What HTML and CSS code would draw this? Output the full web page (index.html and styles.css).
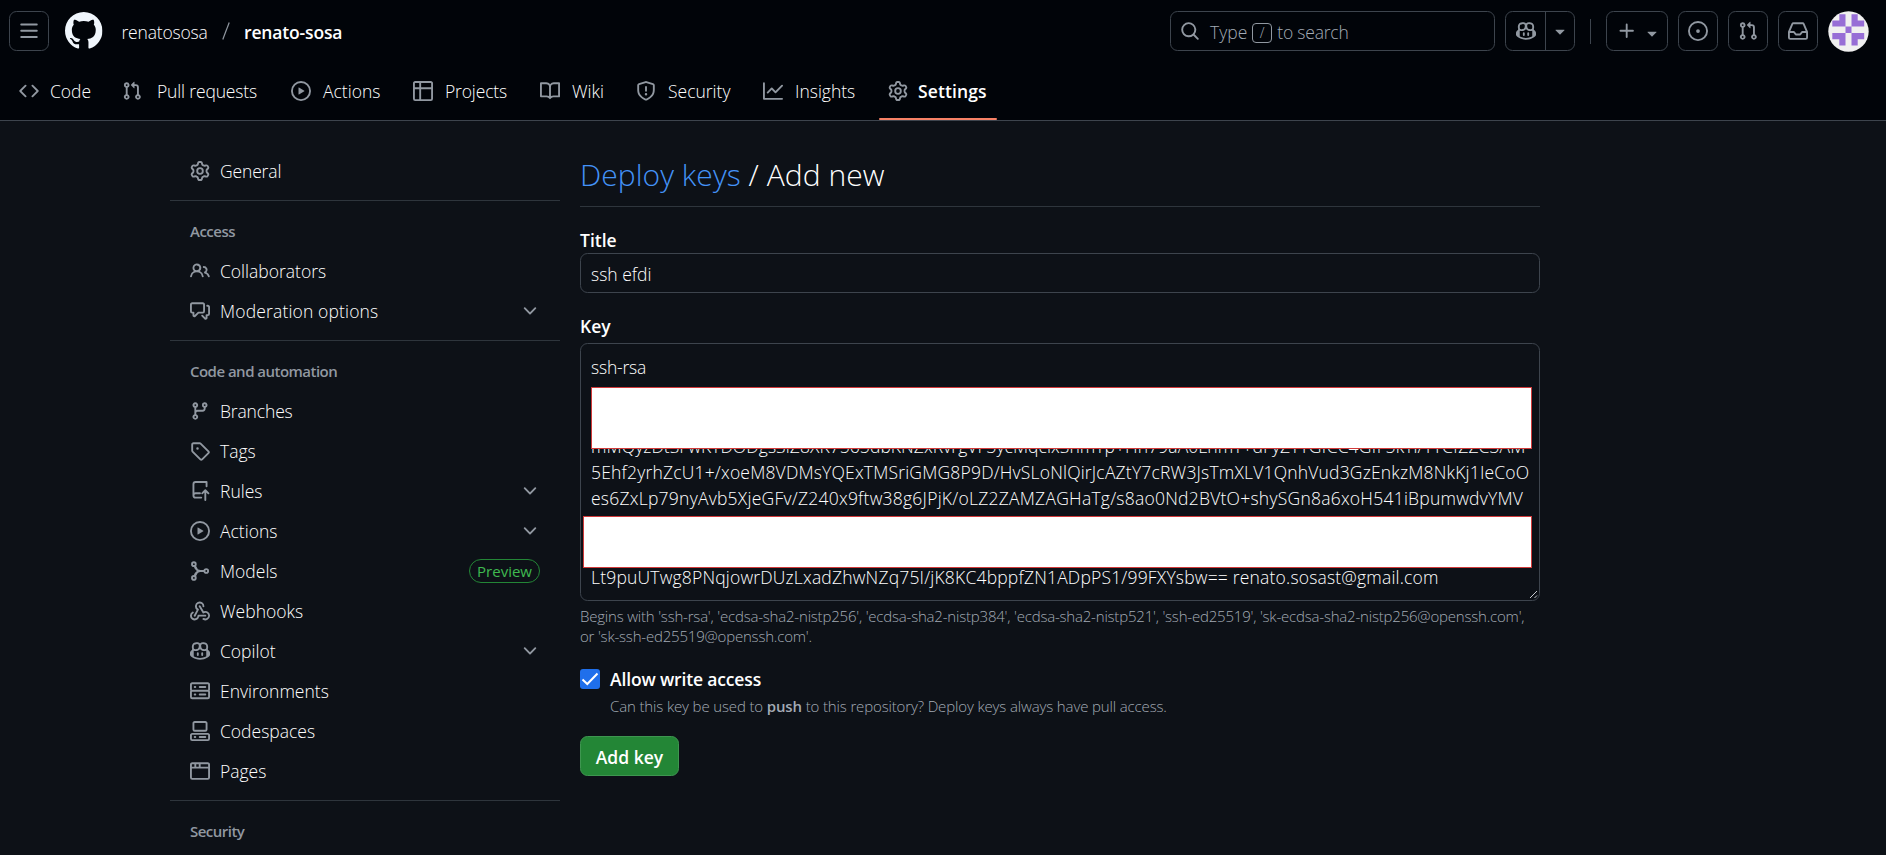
FILE: index.html
```
<!DOCTYPE html>
<html lang="en">
<head>
<meta charset="utf-8">
<title>Add new deploy key</title>
<link rel="stylesheet" href="styles.css">
</head>
<body>
<svg class="sprite" aria-hidden="true">
  <symbol id="bars" viewBox="0 0 16 16"><path d="M1 2.75A.75.75 0 0 1 1.75 2h12.5a.75.75 0 0 1 0 1.5H1.75A.75.75 0 0 1 1 2.75Zm0 5A.75.75 0 0 1 1.75 7h12.5a.75.75 0 0 1 0 1.5H1.75A.75.75 0 0 1 1 7.75ZM1.75 12h12.5a.75.75 0 0 1 0 1.5H1.75a.75.75 0 0 1 0-1.5Z"/></symbol>
  <symbol id="mark" viewBox="0 0 16 16"><path d="M8 0c4.42 0 8 3.58 8 8a8.013 8.013 0 0 1-5.45 7.59c-.4.08-.55-.17-.55-.38 0-.27.01-1.13.01-2.2 0-.75-.25-1.23-.54-1.48 1.78-.2 3.65-.88 3.65-3.95 0-.88-.31-1.59-.82-2.15.08-.2.36-1.02-.08-2.12 0 0-.67-.22-2.2.82-.64-.18-1.32-.27-2-.27-.68 0-1.36.09-2 .27-1.53-1.03-2.2-.82-2.2-.82-.44 1.1-.16 1.92-.08 2.12-.51.56-.82 1.28-.82 2.15 0 3.06 1.86 3.75 3.64 3.95-.23.2-.44.55-.51 1.07-.46.21-1.61.55-2.33-.66-.15-.24-.6-.83-1.23-.82-.67.01-.27.38.01.53.34.19.73.9.82 1.13.16.45.68 1.31 2.69.94 0 .67.01 1.3.01 1.49 0 .21-.15.45-.55.38A7.995 7.995 0 0 1 0 8c0-4.42 3.58-8 8-8Z"/></symbol>
  <symbol id="code" viewBox="0 0 16 16"><path d="m11.28 3.22 4.25 4.25a.75.75 0 0 1 0 1.06l-4.25 4.25a.749.749 0 0 1-1.275-.326.749.749 0 0 1 .215-.734L13.94 8l-3.72-3.72a.749.749 0 0 1 .326-1.275.749.749 0 0 1 .734.215Zm-6.56 0a.751.751 0 0 1 1.042.018.751.751 0 0 1 .018 1.042L2.06 8l3.72 3.72a.749.749 0 0 1-.326 1.275.749.749 0 0 1-.734-.215L.47 8.53a.75.75 0 0 1 0-1.06Z"/></symbol>
  <symbol id="pr" viewBox="0 0 16 16"><path d="M1.5 3.25a2.25 2.25 0 1 1 3 2.122v5.256a2.251 2.251 0 1 1-1.5 0V5.372A2.25 2.25 0 0 1 1.5 3.25Zm5.677-.177L9.573.677A.25.25 0 0 1 10 .854V2.5h1A2.5 2.5 0 0 1 13.5 5v5.628a2.251 2.251 0 1 1-1.5 0V5a1 1 0 0 0-1-1h-1v1.646a.25.25 0 0 1-.427.177L7.177 3.427a.25.25 0 0 1 0-.354ZM3.75 2.5a.75.75 0 1 0 0 1.5.75.75 0 0 0 0-1.5Zm0 9.5a.75.75 0 1 0 0 1.5.75.75 0 0 0 0-1.5Zm8.25.75a.75.75 0 1 0 1.5 0 .75.75 0 0 0-1.5 0Z"/></symbol>
  <symbol id="play" viewBox="0 0 16 16"><path d="M8 0a8 8 0 1 1 0 16A8 8 0 0 1 8 0ZM1.5 8a6.5 6.5 0 1 0 13 0 6.5 6.5 0 0 0-13 0Zm4.879-2.773 4.264 2.559a.25.25 0 0 1 0 .428l-4.264 2.559A.25.25 0 0 1 6 10.559V5.442a.25.25 0 0 1 .379-.215Z"/></symbol>
  <symbol id="table" viewBox="0 0 16 16"><path d="M0 1.75C0 .784.784 0 1.75 0h12.5C15.216 0 16 .784 16 1.75v12.5A1.75 1.75 0 0 1 14.25 16H1.75A1.75 1.75 0 0 1 0 14.25ZM6.5 6.5v8h7.75a.25.25 0 0 0 .25-.25V6.5Zm8-1.5V1.75a.25.25 0 0 0-.25-.25H6.5V5Zm-13 1.5v7.75c0 .138.112.25.25.25H5v-8ZM5 5V1.5H1.75a.25.25 0 0 0-.25.25V5Z"/></symbol>
  <symbol id="book" viewBox="0 0 16 16"><path d="M0 1.75A.75.75 0 0 1 .75 1h4.253c1.227 0 2.317.59 3 1.501A3.743 3.743 0 0 1 11.006 1h4.245a.75.75 0 0 1 .75.75v10.5a.75.75 0 0 1-.75.75h-4.507a2.25 2.25 0 0 0-1.591.659l-.622.621a.75.75 0 0 1-1.06 0l-.622-.621A2.25 2.25 0 0 0 5.258 13H.75a.75.75 0 0 1-.75-.75Zm7.251 10.324.004-5.073-.002-2.253A2.25 2.25 0 0 0 5.003 2.5H1.5v9h3.757a3.75 3.75 0 0 1 1.994.574ZM8.755 4.75l-.004 7.322a3.752 3.752 0 0 1 1.992-.572H14.5v-9h-3.495a2.25 2.25 0 0 0-2.25 2.25Z"/></symbol>
  <symbol id="shield" viewBox="0 0 16 16"><path d="M7.467.133a1.748 1.748 0 0 1 1.066 0l5.25 1.68A1.75 1.75 0 0 1 15 3.48V7c0 1.566-.32 3.182-1.303 4.682-.983 1.498-2.585 2.813-5.032 3.855a1.697 1.697 0 0 1-1.33 0c-2.447-1.042-4.049-2.357-5.032-3.855C1.32 10.182 1 8.566 1 7V3.48a1.75 1.75 0 0 1 1.217-1.667Zm.61 1.429a.25.25 0 0 0-.153 0l-5.25 1.68a.25.25 0 0 0-.174.238V7c0 1.358.275 2.666 1.057 3.86.784 1.194 2.121 2.34 4.366 3.297a.196.196 0 0 0 .154 0c2.245-.956 3.582-2.104 4.366-3.298C13.225 9.666 13.5 8.36 13.5 7V3.48a.251.251 0 0 0-.174-.237l-5.25-1.68ZM8.75 4.75v3a.75.75 0 0 1-1.5 0v-3a.75.75 0 0 1 1.5 0ZM9 10.5a1 1 0 1 1-2 0 1 1 0 0 1 2 0Z"/></symbol>
  <symbol id="graph" viewBox="0 0 16 16"><path d="M1.5 1.75V13.5h13.75a.75.75 0 0 1 0 1.5H.75a.75.75 0 0 1-.75-.75V1.75a.75.75 0 0 1 1.5 0Zm14.28 2.53-5.25 5.25a.75.75 0 0 1-1.06 0L7 7.06 4.28 9.78a.751.751 0 0 1-1.042-.018.751.751 0 0 1-.018-1.042l3.25-3.25a.75.75 0 0 1 1.06 0L10 7.94l4.72-4.72a.751.751 0 0 1 1.042.018.751.751 0 0 1 .018 1.042Z"/></symbol>
  <symbol id="gear" viewBox="0 0 16 16"><path d="M8 0a8.2 8.2 0 0 1 .701.031C9.444.095 9.99.645 10.16 1.29l.288 1.107c.018.066.079.158.212.224.231.114.454.243.668.386.123.082.233.09.299.071l1.103-.303c.644-.176 1.392.021 1.82.63.27.385.506.792.704 1.218.315.675.111 1.422-.364 1.891l-.814.806c-.049.048-.098.147-.088.294.016.257.016.515 0 .772-.01.147.038.246.088.294l.814.806c.475.469.679 1.216.364 1.891a7.977 7.977 0 0 1-.704 1.217c-.428.61-1.176.807-1.82.63l-1.102-.302c-.067-.019-.177-.011-.3.071a5.909 5.909 0 0 1-.668.386c-.133.066-.194.158-.211.224l-.29 1.106c-.168.646-.715 1.196-1.458 1.26a8.006 8.006 0 0 1-1.402 0c-.743-.064-1.289-.614-1.458-1.26l-.289-1.106c-.018-.066-.079-.158-.212-.224a5.738 5.738 0 0 1-.668-.386c-.123-.082-.233-.09-.299-.071l-1.103.303c-.644.176-1.392-.021-1.82-.63a8.12 8.12 0 0 1-.704-1.218c-.315-.675-.111-1.422.363-1.891l.815-.806c.05-.048.098-.147.088-.294a6.214 6.214 0 0 1 0-.772c.01-.147-.038-.246-.088-.294l-.815-.806C.635 6.045.431 5.298.746 4.623a7.92 7.92 0 0 1 .704-1.217c.428-.61 1.176-.807 1.82-.63l1.102.302c.067.019.177.011.3-.071.214-.143.437-.272.668-.386.133-.066.194-.158.211-.224l.29-1.106C6.009.645 6.556.095 7.299.03 7.53.01 7.764 0 8 0Zm-.571 1.525c-.036.003-.108.036-.137.146l-.289 1.105c-.147.561-.549.967-.998 1.189-.173.086-.34.183-.5.29-.417.278-.97.423-1.529.27l-1.103-.303c-.109-.03-.175.016-.195.045-.22.312-.412.644-.573.99-.014.031-.021.11.059.19l.815.806c.411.406.562.957.53 1.456a4.709 4.709 0 0 0 0 .582c.032.499-.119 1.05-.53 1.456l-.815.806c-.081.08-.073.159-.059.19.162.346.353.677.573.989.02.03.085.076.195.046l1.102-.303c.56-.153 1.113-.008 1.53.27.161.107.328.204.501.29.447.222.85.629.997 1.189l.289 1.105c.029.109.101.143.137.146a6.6 6.6 0 0 0 1.142 0c.036-.003.108-.036.137-.146l.289-1.105c.147-.561.549-.967.998-1.189.173-.086.34-.183.5-.29.417-.278.97-.423 1.529-.27l1.103.303c.109.029.175-.016.195-.045.22-.313.411-.644.573-.99.014-.031.021-.11-.059-.19l-.815-.806c-.411-.406-.562-.957-.53-1.456a4.709 4.709 0 0 0 0-.582c-.032-.499.119-1.05.53-1.456l.815-.806c.081-.08.073-.159.059-.19a6.464 6.464 0 0 0-.573-.989c-.02-.03-.085-.076-.195-.046l-1.102.303c-.56.153-1.113.008-1.53-.27a4.44 4.44 0 0 0-.501-.29c-.447-.222-.85-.629-.997-1.189l-.289-1.105c-.029-.11-.101-.143-.137-.146a6.6 6.6 0 0 0-1.142 0ZM11 8a3 3 0 1 1-6 0 3 3 0 0 1 6 0ZM9.5 8a1.5 1.5 0 1 0-3.001.001A1.5 1.5 0 0 0 9.5 8Z"/></symbol>
  <symbol id="search" viewBox="0 0 16 16"><path d="M10.68 11.74a6 6 0 0 1-7.922-8.982 6 6 0 0 1 8.982 7.922l3.04 3.04a.749.749 0 0 1-.326 1.275.749.749 0 0 1-.734-.215ZM11.5 7a4.499 4.499 0 1 0-8.997 0A4.499 4.499 0 0 0 11.5 7Z"/></symbol>
  <symbol id="copilot" viewBox="0 0 16 16"><path d="M7.998 15.035c-4.562 0-7.873-2.914-7.998-3.749V9.338c.085-.628.677-1.686 1.588-2.065.013-.07.024-.143.036-.218.029-.183.06-.384.126-.612-.201-.508-.254-1.084-.254-1.656 0-.87.128-1.769.693-2.484.579-.733 1.494-1.124 2.724-1.261 1.206-.134 2.262.034 2.944.765.05.053.096.108.139.165.044-.057.094-.112.143-.165.682-.731 1.738-.899 2.944-.765 1.23.137 2.145.528 2.724 1.261.566.715.693 1.614.693 2.484 0 .572-.053 1.148-.254 1.656.066.228.098.429.126.612.012.076.024.148.037.218.924.385 1.522 1.471 1.591 2.095v1.872c0 .766-3.351 3.795-8.002 3.795Zm0-1.485c2.28 0 4.584-1.11 5.002-1.433V7.862l-.023-.116c-.49.21-1.075.291-1.727.291-1.146 0-2.059-.327-2.71-.991A3.222 3.222 0 0 1 8 6.303a3.24 3.24 0 0 1-.544.743c-.65.664-1.563.991-2.71.991-.652 0-1.236-.081-1.727-.291l-.023.116v4.255c.419.323 2.722 1.433 5.002 1.433ZM6.762 2.83c-.193-.206-.637-.413-1.682-.297-1.019.113-1.479.404-1.713.7-.247.312-.369.789-.369 1.554 0 .793.129 1.171.308 1.371.162.181.519.379 1.442.379.853 0 1.339-.235 1.638-.54.315-.322.527-.827.617-1.553.117-.935-.037-1.395-.241-1.614Zm4.155-.297c-1.044-.116-1.488.091-1.681.297-.204.219-.359.679-.242 1.614.091.726.303 1.231.618 1.553.299.305.784.54 1.638.54.922 0 1.28-.198 1.442-.379.179-.2.308-.578.308-1.371 0-.765-.123-1.242-.37-1.554-.233-.296-.693-.587-1.713-.7Z"/><path d="M6.25 9.037a.75.75 0 0 1 .75.75v1.501a.75.75 0 0 1-1.5 0V9.787a.75.75 0 0 1 .75-.75Zm4.25.75v1.501a.75.75 0 0 1-1.5 0V9.787a.75.75 0 0 1 1.5 0Z"/></symbol>
  <symbol id="issue" viewBox="0 0 16 16"><path d="M8 9.5a1.5 1.5 0 1 0 0-3 1.5 1.5 0 0 0 0 3Z"/><path d="M8 0a8 8 0 1 1 0 16A8 8 0 0 1 8 0ZM1.5 8a6.5 6.5 0 1 0 13 0 6.5 6.5 0 0 0-13 0Z"/></symbol>
  <symbol id="inbox" viewBox="0 0 16 16"><path d="M2.8 2.06A1.75 1.75 0 0 1 4.41 1h7.18c.7 0 1.333.417 1.61 1.06l2.74 6.395c.04.093.06.194.06.295v4.5A1.75 1.75 0 0 1 14.25 15H1.75A1.75 1.75 0 0 1 0 13.25v-4.5c0-.101.02-.202.06-.295Zm1.61.44a.25.25 0 0 0-.23.152L1.887 8H4.75a.75.75 0 0 1 .6.3L6.625 10h2.75l1.275-1.7a.75.75 0 0 1 .6-.3h2.863L11.82 2.652a.25.25 0 0 0-.23-.152Zm10.09 7h-2.875l-1.275 1.7a.75.75 0 0 1-.6.3h-3.5a.75.75 0 0 1-.6-.3L4.375 9.5H1.5v3.75c0 .138.112.25.25.25h12.5a.25.25 0 0 0 .25-.25Z"/></symbol>
  <symbol id="people" viewBox="0 0 16 16"><path d="M2 5.5a3.5 3.5 0 1 1 5.898 2.549 5.508 5.508 0 0 1 3.034 4.084.75.75 0 1 1-1.482.235 4 4 0 0 0-7.9 0 .75.75 0 0 1-1.482-.236A5.507 5.507 0 0 1 3.102 8.05 3.493 3.493 0 0 1 2 5.5ZM11 4a3.001 3.001 0 0 1 2.22 5.018 5.01 5.01 0 0 1 2.56 3.012.749.749 0 0 1-.885.954.752.752 0 0 1-.549-.514 3.507 3.507 0 0 0-2.522-2.372.75.75 0 0 1-.574-.73v-.352a.75.75 0 0 1 .416-.672A1.5 1.5 0 0 0 11 5.5.75.75 0 0 1 11 4Zm-5.5-.5a2 2 0 1 0-.001 3.999A2 2 0 0 0 5.5 3.5Z"/></symbol>
  <symbol id="discussion" viewBox="0 0 16 16"><path d="M1.75 1h8.5c.966 0 1.75.784 1.75 1.75v5.5A1.75 1.75 0 0 1 10.25 10H7.061l-2.574 2.573A1.458 1.458 0 0 1 2 11.543V10h-.25A1.75 1.75 0 0 1 0 8.25v-5.5C0 1.784.784 1 1.75 1ZM1.5 2.75v5.5c0 .138.112.25.25.25h1a.75.75 0 0 1 .75.75v2.19l2.72-2.72a.749.749 0 0 1 .53-.22h3.5a.25.25 0 0 0 .25-.25v-5.5a.25.25 0 0 0-.25-.25h-8.5a.25.25 0 0 0-.25.25Zm13 2a.25.25 0 0 0-.25-.25h-.5a.75.75 0 0 1 0-1.5h.5c.966 0 1.75.784 1.75 1.75v5.5A1.75 1.75 0 0 1 14.25 12H14v1.543a1.458 1.458 0 0 1-2.487 1.03L9.22 12.28a.749.749 0 0 1 .326-1.275.749.749 0 0 1 .734.215l2.22 2.22v-2.19a.75.75 0 0 1 .75-.75h1a.25.25 0 0 0 .25-.25Z"/></symbol>
  <symbol id="branch" viewBox="0 0 16 16"><path d="M9.5 3.25a2.25 2.25 0 1 1 3 2.122V6A2.5 2.5 0 0 1 10 8.5H6a1 1 0 0 0-1 1v1.128a2.251 2.251 0 1 1-1.5 0V5.372a2.25 2.25 0 1 1 1.5 0v1.836A2.493 2.493 0 0 1 6 7h4a1 1 0 0 0 1-1v-.628A2.25 2.25 0 0 1 9.5 3.25Zm-6 0a.75.75 0 1 0 1.5 0 .75.75 0 0 0-1.5 0Zm8.25-.75a.75.75 0 1 0 0 1.5.75.75 0 0 0 0-1.5ZM4.25 12a.75.75 0 1 0 0 1.5.75.75 0 0 0 0-1.5Z"/></symbol>
  <symbol id="tag" viewBox="0 0 16 16"><path d="M1 7.775V2.75C1 1.784 1.784 1 2.75 1h5.025c.464 0 .91.184 1.238.513l6.25 6.25a1.75 1.75 0 0 1 0 2.474l-5.026 5.026a1.75 1.75 0 0 1-2.474 0l-6.25-6.25A1.752 1.752 0 0 1 1 7.775Zm1.5 0c0 .066.026.13.073.177l6.25 6.25a.25.25 0 0 0 .354 0l5.025-5.025a.25.25 0 0 0 0-.354l-6.25-6.25a.25.25 0 0 0-.177-.073H2.75a.25.25 0 0 0-.25.25ZM6 5a1 1 0 1 1 0 2 1 1 0 0 1 0-2Z"/></symbol>
  <symbol id="rules" viewBox="0 0 16 16"><g fill="none" stroke="currentColor" stroke-width="1.5" stroke-linecap="round" stroke-linejoin="round"><path d="M13.25 4.25V.75H4.5A1.75 1.75 0 0 0 2.75 2.5v9M8 9.75H4.5a1.75 1.75 0 0 0 0 3.5H9"/><path d="M12.25 15.25V7.6M9.75 9.9l2.5-2.5 2.5 2.5"/></g></symbol>
  <symbol id="model" viewBox="0 0 16 16"><g fill="none" stroke="currentColor" stroke-width="1.5" stroke-linecap="round"><circle cx="3.1" cy="2.5" r="1.5"/><circle cx="3.1" cy="13.5" r="1.5"/><circle cx="13" cy="8" r="1.5"/><path d="M11.4 8H6.2M4 4l2.2 4L4 12M3.7 4.2C4.3 6 5 7.4 8 8 5 8.6 4.3 10 3.7 11.8"/></g></symbol>
  <symbol id="webhook" viewBox="0 0 16 16"><path d="M5.5 4.25a2.25 2.25 0 0 1 4.5 0 .75.75 0 0 0 1.5 0 3.75 3.75 0 1 0-6.14 2.889l-2.272 4.258a.75.75 0 0 0 1.324.706L7 7.25a.75.75 0 0 0-.309-1.015A2.25 2.25 0 0 1 5.5 4.25Z"/><path d="M7.364 3.607a.75.75 0 0 1 1.03.257l2.608 4.349a3.75 3.75 0 1 1-.628 6.785.75.75 0 0 1 .752-1.299 2.25 2.25 0 1 0-.033-3.88.75.75 0 0 1-1.03-.256L7.107 4.636a.75.75 0 0 1 .257-1.03Z"/><path d="M2.9 8.776A.75.75 0 0 1 2.625 9.8 2.25 2.25 0 1 0 6 11.75a.75.75 0 0 1 .75-.751h5.5a.75.75 0 0 1 0 1.5H7.425a3.751 3.751 0 1 1-5.55-3.998.75.75 0 0 1 1.024.274Z"/></symbol>
  <symbol id="server" viewBox="0 0 16 16"><path d="M1.75 1h12.5c.966 0 1.75.784 1.75 1.75v4c0 .372-.116.717-.314 1 .198.283.314.628.314 1v4a1.75 1.75 0 0 1-1.75 1.75H1.75A1.75 1.75 0 0 1 0 12.75v-4c0-.358.109-.707.314-1a1.739 1.739 0 0 1-.314-1v-4C0 1.784.784 1 1.75 1ZM1.5 2.75v4c0 .138.112.25.25.25h12.5a.25.25 0 0 0 .25-.25v-4a.25.25 0 0 0-.25-.25H1.75a.25.25 0 0 0-.25.25Zm.25 5.75a.25.25 0 0 0-.25.25v4c0 .138.112.25.25.25h12.5a.25.25 0 0 0 .25-.25v-4a.25.25 0 0 0-.25-.25ZM7 4.75A.75.75 0 0 1 7.75 4h4.5a.75.75 0 0 1 0 1.5h-4.5A.75.75 0 0 1 7 4.75ZM7.75 10h4.5a.75.75 0 0 1 0 1.5h-4.5a.75.75 0 0 1 0-1.5ZM3 4.75A.75.75 0 0 1 3.75 4h.5a.75.75 0 0 1 0 1.5h-.5A.75.75 0 0 1 3 4.75ZM3.75 10h.5a.75.75 0 0 1 0 1.5h-.5a.75.75 0 0 1 0-1.5Z"/></symbol>
  <symbol id="codespaces" viewBox="0 0 16 16"><path d="M0 11.25c0-.966.784-1.75 1.75-1.75h12.5c.966 0 1.75.784 1.75 1.75v3A1.75 1.75 0 0 1 14.25 16H1.75A1.75 1.75 0 0 1 0 14.25Zm2-9.5C2 .784 2.784 0 3.75 0h8.5C13.216 0 14 .784 14 1.75v5a1.75 1.75 0 0 1-1.75 1.75h-8.5A1.75 1.75 0 0 1 2 6.75Zm1.75-.25a.25.25 0 0 0-.25.25v5c0 .138.112.25.25.25h8.5a.25.25 0 0 0 .25-.25v-5a.25.25 0 0 0-.25-.25Zm-2 9.5a.25.25 0 0 0-.25.25v3c0 .138.112.25.25.25h12.5a.25.25 0 0 0 .25-.25v-3a.25.25 0 0 0-.25-.25Z"/><path d="M7 12.75a.75.75 0 0 1 .75-.75h4.5a.75.75 0 0 1 0 1.5h-4.5a.75.75 0 0 1-.75-.75Zm-4 0a.75.75 0 0 1 .75-.75h.5a.75.75 0 0 1 0 1.5h-.5a.75.75 0 0 1-.75-.75Z"/></symbol>
  <symbol id="browser" viewBox="0 0 16 16"><path d="M0 2.75C0 1.784.784 1 1.75 1h12.5c.966 0 1.75.784 1.75 1.75v10.5A1.75 1.75 0 0 1 14.25 15H1.75A1.75 1.75 0 0 1 0 13.25ZM14.5 6h-13v7.25c0 .138.112.25.25.25h12.5a.25.25 0 0 0 .25-.25Zm-6-3.5v2h6V2.75a.25.25 0 0 0-.25-.25ZM5 2.5v2h2v-2Zm-3.25 0a.25.25 0 0 0-.25.25V4.5h2v-2Z"/></symbol>
  <symbol id="chevron" viewBox="0 0 16 16"><path d="M12.78 5.22a.749.749 0 0 1 0 1.06l-4.25 4.25a.749.749 0 0 1-1.06 0L3.22 6.28a.749.749 0 1 1 1.06-1.06L8 8.939l3.72-3.719a.749.749 0 0 1 1.06 0Z"/></symbol>
  <symbol id="plus" viewBox="0 0 16 16"><path d="M7.75 2a.75.75 0 0 1 .75.75V7h4.25a.75.75 0 0 1 0 1.5H8.5v4.25a.75.75 0 0 1-1.5 0V8.5H2.75a.75.75 0 0 1 0-1.5H7V2.75A.75.75 0 0 1 7.75 2Z"/></symbol>
  <symbol id="triangle" viewBox="0 0 16 16"><path d="m4.427 7.427 3.396 3.396a.25.25 0 0 0 .354 0l3.396-3.396A.25.25 0 0 0 11.396 7H4.604a.25.25 0 0 0-.177.427Z"/></symbol>
</svg>

<header class="header">
  <div class="topbar">
    <button class="icon-button"><svg class="icon"><use href="#bars"/></svg></button>
    <svg class="logo"><use href="#mark"/></svg>
    <div class="crumbs"><span class="owner">renatososa</span><svg class="crumb-slash" viewBox="0 0 8 18"><path d="M7.2.5.8 17.5"/></svg><strong>renato-sosa</strong></div>
    <div class="tools">
      <div class="search"><svg class="icon"><use href="#search"/></svg><span class="search-type">Type</span><kbd>/</kbd><span class="search-rest">to search</span></div>
      <div class="split-button"><span class="split-main"><svg class="icon"><use href="#copilot"/></svg></span><span class="split-caret"><svg class="icon"><use href="#triangle"/></svg></span></div>
      <span class="separator"></span>
      <div class="new-button"><svg class="icon"><use href="#plus"/></svg><svg class="icon caret"><use href="#triangle"/></svg></div>
      <button class="icon-button"><svg class="icon"><use href="#issue"/></svg></button>
      <button class="icon-button"><svg class="icon"><use href="#pr"/></svg></button>
      <button class="icon-button"><svg class="icon"><use href="#inbox"/></svg></button>
      <svg class="avatar" viewBox="0 0 41 41"><clipPath id="round"><circle cx="20.5" cy="20.5" r="20.2"/></clipPath><g clip-path="url(#round)"><path fill="#f0f0f0" d="M0 0h41v41H0z"/><path fill="#976ed6" d="M11.3 3.2h6.2v12.4H4.3V9.4h7zM23.5 3.2h6.2v6.2h6.5v6.2H23.5zM17.5 15.600h6v6.300h-6zM4.300 21.900h13.200v12.500h-6.200v-6.200h-7zM23.500 21.900h12.700v6.300h-6.500v6.200h-6.200z"/></g></svg>
    </div>
  </div>
  <nav class="nav">
    <a class="nav-item"><svg class="icon"><use href="#code"/></svg>Code</a>
    <a class="nav-item snug wide-gap"><svg class="icon"><use href="#pr"/></svg>Pull requests</a>
    <a class="nav-item"><svg class="icon"><use href="#play"/></svg>Actions</a>
    <a class="nav-item snug"><svg class="icon"><use href="#table"/></svg>Projects</a>
    <a class="nav-item"><svg class="icon"><use href="#book"/></svg>Wiki</a>
    <a class="nav-item"><svg class="icon"><use href="#shield"/></svg>Security</a>
    <a class="nav-item"><svg class="icon"><use href="#graph"/></svg>Insights</a>
    <a class="nav-item selected"><svg class="icon"><use href="#gear"/></svg>Settings</a>
  </nav>
</header>

<div class="page">
  <aside class="sidebar">
    <section class="group">
      <a class="row snug"><svg class="icon"><use href="#gear"/></svg>General</a>
    </section>
    <section class="group">
      <h2>Access</h2>
      <a class="row"><svg class="icon"><use href="#people"/></svg>Collaborators</a>
      <a class="row airy"><svg class="icon"><use href="#discussion"/></svg>Moderation options<svg class="icon end"><use href="#chevron"/></svg></a>
    </section>
    <section class="group">
      <h2>Code and automation</h2>
      <a class="row snug"><svg class="icon"><use href="#branch"/></svg>Branches</a>
      <a class="row"><svg class="icon"><use href="#tag"/></svg>Tags</a>
      <a class="row"><svg class="icon"><use href="#rules"/></svg>Rules<svg class="icon end"><use href="#chevron"/></svg></a>
      <a class="row"><svg class="icon"><use href="#play"/></svg>Actions<svg class="icon end"><use href="#chevron"/></svg></a>
      <a class="row"><svg class="icon"><use href="#model"/></svg>Models<span class="pill end">Preview</span></a>
      <a class="row"><svg class="icon"><use href="#webhook"/></svg>Webhooks</a>
      <a class="row"><svg class="icon"><use href="#copilot"/></svg>Copilot<svg class="icon end"><use href="#chevron"/></svg></a>
      <a class="row"><svg class="icon"><use href="#server"/></svg>Environments</a>
      <a class="row"><svg class="icon"><use href="#codespaces"/></svg>Codespaces</a>
      <a class="row"><svg class="icon"><use href="#browser"/></svg>Pages</a>
    </section>
    <section class="group last">
      <h2>Security</h2>
    </section>
  </aside>

  <main class="content">
    <h1><a>Deploy keys</a> / Add new</h1>
    <div class="label">Title</div>
    <div class="input">ssh efdi</div>
    <div class="label">Key</div>
    <div class="textarea">
      <div class="line line-short">ssh-rsa</div>
      <div class="line"></div>
      <div class="line"></div>
      <div class="line line-dense">mMQyzDtSFwKTDODgsSiZ8XK7565dbKNZxRvrgVF3ycMqclxShmTp+Hh79aA0LnmT+dFyZTYGfCC4GfF5kYi/TTCfZZC3AM</div>
      <div class="line">5Ehf2yrhZcU1+/xoeM8VDMsYQExTMSriGMG8P9D/HvSLoNlQirJcAZtY7cRW3JsTmXLV1QnhVud3GzEnkzM8NkKj1IeCoO</div>
      <div class="line line-loose">es6ZxLp79nyAvb5XjeGFv/Z240x9ftw38g6JPjK/oLZ2ZAMZAGHaTg/s8ao0Nd2BVtO+shySGn8a6xoH541iBpumwdvYMV</div>
      <div class="line"></div>
      <div class="line"></div>
      <div class="line">Lt9puUTwg8PNqjowrDUzLxadZhwNZq75I/jK8KC4bppfZN1ADpPS1/99FXYsbw== renato.sosast@gmail.com</div>
      <div class="cover cover-top"></div>
      <div class="cover cover-bottom"></div>
      <svg class="grip" viewBox="0 0 9 9"><path d="M1 8 8 1M5.500 8 8 5.500"/></svg>
    </div>
    <p class="hint">Begins with 'ssh-rsa', 'ecdsa-sha2-nistp256', 'ecdsa-sha2-nistp384', 'ecdsa-sha2-nistp521', 'ssh-ed25519', 'sk-ecdsa-sha2-nistp256@openssh.com',<br>or 'sk-ssh-ed25519@openssh.com'.</p>
    <div class="check-row">
      <span class="checkbox"><svg viewBox="0 0 20 20"><path d="M2.500 10.500 7.300 15 17.500 4.500"/></svg></span>
      <strong>Allow write access</strong>
    </div>
    <p class="note">Can this key be used to <b>push</b> to this repository? Deploy keys always have pull access.</p>
    <button class="submit">Add key</button>
  </main>
</div>
</body>
</html>
```
FILE: styles.css
```
* { box-sizing: border-box; }
body {
  margin: 0;
  height: 855px;
  overflow: hidden;
  background: #0d1117;
  color: #fff;
  font: 300 17.5px/26.25px "Open Sans", "Noto Sans", sans-serif;
}
.sprite { display: none; }
.icon { width: 20px; height: 20px; flex: none; fill: currentColor; color: #9198a1; }
button { font: inherit; color: inherit; padding: 0; }

.header { height: 121px; background: #010409; border-bottom: 1px solid #3d444d; }
.topbar { height: 62px; padding: 0 17px 0 9px; display: flex; align-items: center; }
.icon-button {
  width: 40px; height: 40px; flex: none;
  display: flex; align-items: center; justify-content: center;
  background: none; border: 1px solid #3d444d; border-radius: 7.5px;
}
.logo { width: 37.5px; height: 37.5px; margin-left: 16px; fill: #f0f6fc; }
.crumbs { display: flex; align-items: center; margin-left: 19px; padding-top: 3px; }
.owner { letter-spacing: -0.2px; width: 100.5px; }
.crumb-slash { width: 8px; height: 18px; margin: -3px 14px 0 0; fill: none; stroke: #9198a1; stroke-width: 1.2; }
.crumbs strong { font-weight: 600; letter-spacing: -0.15px; }
.tools { display: flex; align-items: center; margin-left: auto; gap: 10px; }
.search {
  width: 325px; height: 40px; padding-left: 9px;
  display: flex; align-items: center;
  border: 1px solid #3d444d; border-radius: 7.5px; color: #a3abb5;
}
.search-type { margin-left: 10px; }
.search-type, .search-rest { padding-top: 2px; }
.search kbd {
  width: 20px; height: 20px; margin: 3px 5px 0 5px;
  border: 1px solid #9198a1; border-radius: 4px;
  font: 300 14px/17px "Open Sans", sans-serif; text-align: center;
}
.search-rest { letter-spacing: -0.2px; }
.split-button { display: flex; width: 70px; height: 40px; border: 1px solid #3d444d; border-radius: 7.5px; }
.split-main { width: 40px; display: flex; align-items: center; justify-content: center; border-right: 1px solid #3d444d; }
.split-caret { flex: 1; display: flex; align-items: center; justify-content: center; }
.separator { width: 1px; height: 25px; margin: 0 5px; background: #3d444d; }
.new-button {
  width: 62px; height: 40px; padding-left: 10px; display: flex; align-items: center; gap: 5px;
  border: 1px solid #3d444d; border-radius: 7.5px;
}
.new-button .caret { margin-top: 4px; }
.avatar { width: 41px; height: 41px; }

.nav {
  height: 58px; padding-left: 19px;
  display: grid; grid-template-columns: 102.5px 169.5px 122px 127px 96px 127px 125px 109px;
}
.nav-item { position: relative; display: flex; align-items: center; gap: 12px; white-space: nowrap; }
.snug { letter-spacing: -0.15px; }
.airy { letter-spacing: 0.15px; }
.wide-gap { gap: 15.5px; }
.nav-item:first-child { gap: 11px; }
.selected { gap: 10px; font-weight: 600; letter-spacing: 0.1px; }
.selected::after {
  content: ""; position: absolute; left: -9px; right: 0; bottom: 0;
  height: 2.5px; border-radius: 1px; background: #f78166;
}

.page { display: grid; grid-template-columns: 390px 960px; column-gap: 20px; padding: 30px 0 0 170px; }
.group { padding-bottom: 9px; border-bottom: 1px solid #3d444db3; }
.last { border: 0; }
.group h2 {
  margin: 0; height: 50px; padding: 20px 20px 0;
  font-size: 15px; line-height: 20px; font-weight: 600; letter-spacing: -0.52px; color: #9198a1;
}
.row { height: 40px; padding: 0 20px; display: flex; align-items: center; gap: 10px; }
.end { margin-left: auto; }
.pill {
  height: 24px; padding: 0 7px; border: 1px solid #238636; border-radius: 12px;
  color: #3fb950; font-size: 15px; line-height: 23px; font-weight: 500;
}

.content h1 {
  margin: 0; height: 56px; padding-top: 1px; border-bottom: 1px solid #3d444db3;
  font-size: 30px; line-height: 46px; font-weight: 330; letter-spacing: 0.05px;
}
.content h1 a { color: #4493f8; }
.label { margin-top: 20px; font-weight: 600; line-height: 26px; }
.input {
  height: 40px; padding: 1px 10px 0; line-height: 38px;
  border: 1px solid #3d444d; border-radius: 7.5px;
}
.textarea {
  position: relative; height: 258px; margin-top: 4px; padding: 10px;
  border: 1px solid #3d444d; border-radius: 7.5px;
}
.line { height: 26.25px; white-space: nowrap; letter-spacing: 0.19px; }
.line-loose { letter-spacing: 0.24px; }
.line-dense { letter-spacing: 0.07px; }
.line-short { letter-spacing: -0.2px; }
.cover { position: absolute; background: #fff; border: 1px solid #d03a3a; }
.cover-top { left: 10px; right: 7px; top: 43px; height: 62px; }
.cover-bottom { left: 2px; right: 7px; top: 172px; height: 52px; }
.grip { position: absolute; right: 1px; bottom: 1px; width: 9px; height: 9px; stroke: #c8ccd0; fill: none; }
.hint, .note { color: #a3abb5; font-size: 15px; line-height: 20px; white-space: nowrap; }
.hint { margin: 5px 0 0; letter-spacing: -0.2px; }
.check-row { margin-top: 20px; display: flex; align-items: center; gap: 10px; }
.check-row strong { font-weight: 600; letter-spacing: -0.15px; }
.checkbox { width: 20px; height: 20px; border-radius: 3px; background: #1f6feb; }
.checkbox svg { display: block; fill: none; stroke: #fff; stroke-width: 2; }
.note { margin: 4px 0 0 30px; letter-spacing: -0.14px; }
.note b { font-weight: 600; }
.submit {
  display: block; width: 99px; height: 40px; margin-top: 20px; padding-top: 1px;
  background: #238636; border: 1px solid #3e9650; border-radius: 7.5px; font-weight: 600;
}
```
